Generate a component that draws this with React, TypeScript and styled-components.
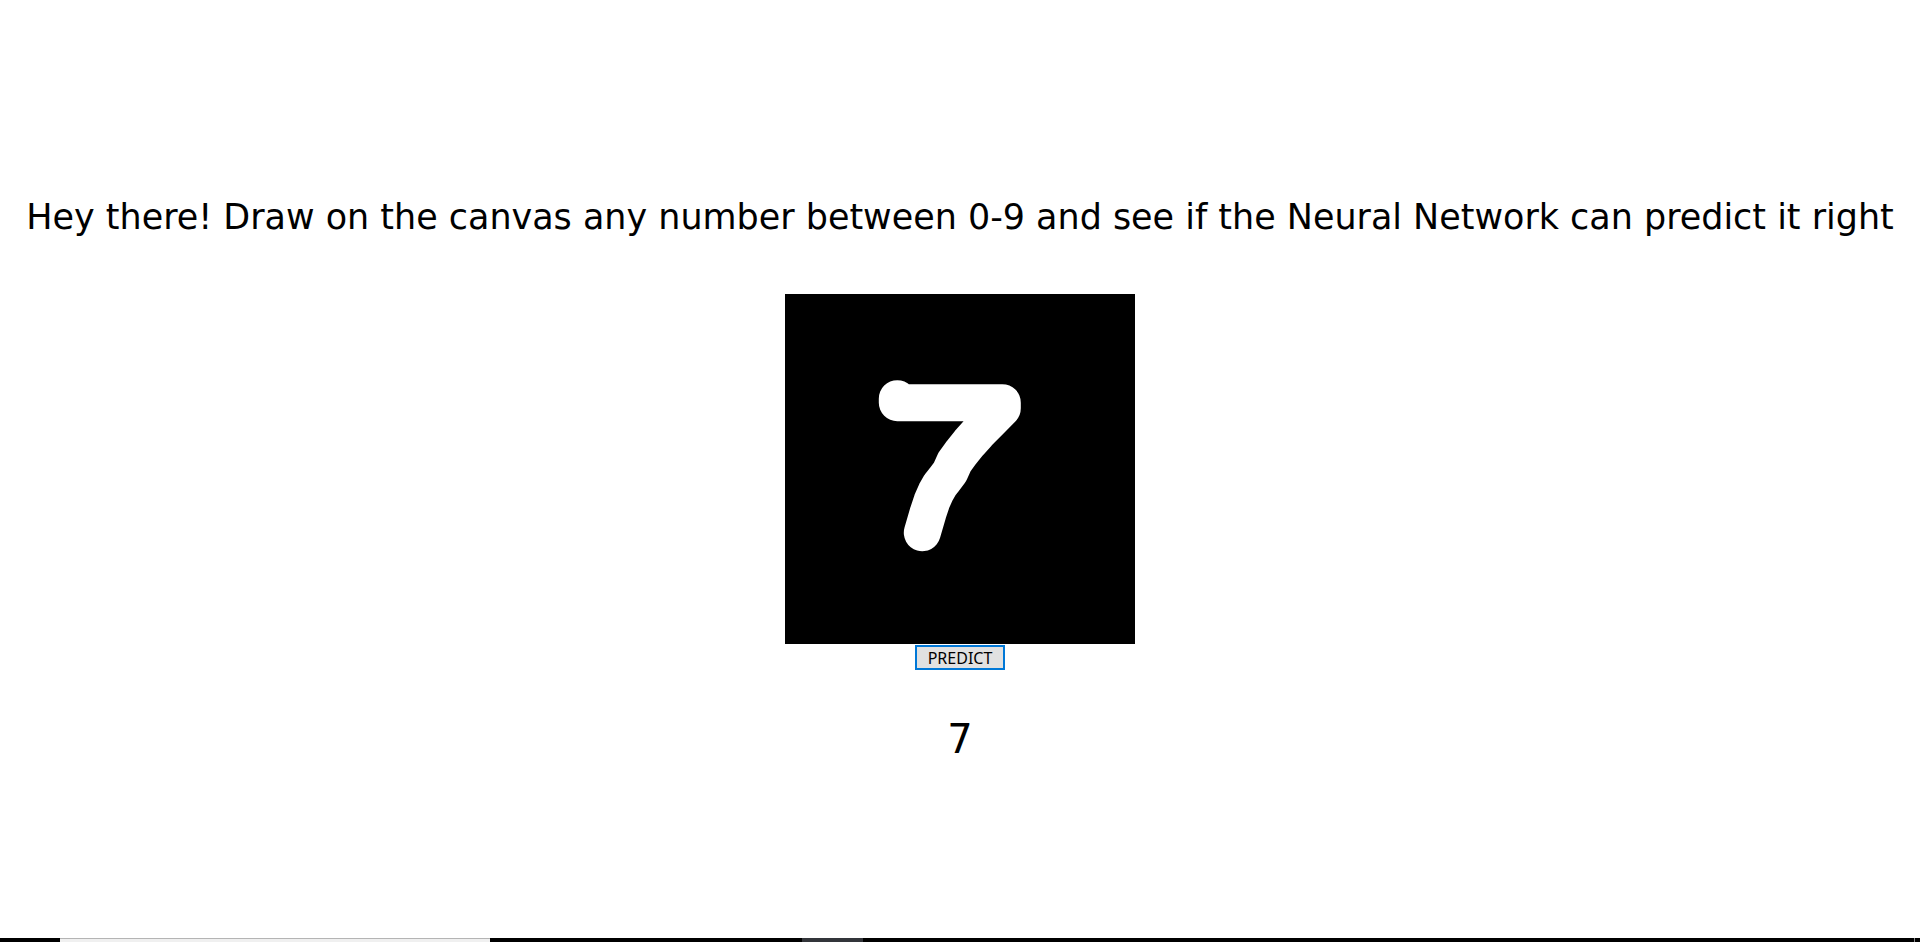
import styled, { createGlobalStyle } from "styled-components";

const GlobalStyle = createGlobalStyle`
  html, body {
    margin: 0;
    padding: 0;
    background: #fff;
    overflow: hidden;
  }
`;

const Page = styled.div`
  height: 942px;
  display: flex;
  flex-direction: column;
  align-items: center;
`;

const Main = styled.main`
  flex: 1;
  width: 100%;
  display: flex;
  flex-direction: column;
  align-items: center;
  padding-top: 193px;
  box-sizing: border-box;
`;

const Heading = styled.h1`
  margin: 0;
  font-family: "Comic Sans MS", "DejaVu Sans", sans-serif;
  font-size: 34.95px;
  line-height: 48px;
  font-weight: 400;
  color: #000;
  white-space: nowrap;
`;

const Canvas = styled.svg`
  display: block;
  width: 350px;
  height: 350px;
  margin-top: 53px;
  background: #000;
`;

const PredictButton = styled.button`
  margin-top: 1px;
  width: 90px;
  height: 25px;
  padding: 1px 0 0;
  box-sizing: border-box;
  border: 2px solid #0078d7;
  border-radius: 0;
  background: #e1e1e1;
  color: #000;
  font-family: "Noto Sans", sans-serif;
  font-size: 16px;
  line-height: 20px;
`;

const Result = styled.div`
  margin-top: 41px;
  font-family: "Comic Sans MS", "DejaVu Sans", sans-serif;
  font-size: 40px;
  line-height: 56px;
  color: #000;
`;

const Taskbar = styled.div`
  flex: none;
  width: 100%;
  height: 4px;
  display: grid;
  grid-template-columns: 60px 430px 312px 61px 1fr 1px 5px;
  background: #000;
`;

const ActiveTask = styled.div`
  background: #f0f0f0;
  border-top: 1px solid #b4b4b4;
`;

const Spacer = styled.div``;

const OpenTask = styled.div`
  background: #33353a;
`;

const CornerEdge = styled.div`
  background: #888;
`;

export default function App() {
  return (
    <Page>
      <GlobalStyle />
      <Main>
        <Heading>Hey there! Draw on the canvas any number between 0-9 and see if the Neural Network can predict it right</Heading>
        <Canvas viewBox="0 0 350 350">
          <path
            d="M112.3 104.7 L112.3 108.7 L217.3 108.7 L217.3 114.3 L205 127 L193 139 L184 149 L176 159 L169.5 168 L165 178 L159 186 L155 191 L151 198 L147 207 L143 219 L137.3 238.7"
            fill="none"
            stroke="#fff"
            strokeWidth="37"
            strokeLinecap="round"
            strokeLinejoin="round"
          />
        </Canvas>
        <PredictButton>PREDICT</PredictButton>
        <Result>7</Result>
      </Main>
      <Taskbar>
        <Spacer />
        <ActiveTask />
        <Spacer />
        <OpenTask />
        <Spacer />
        <CornerEdge />
        <Spacer />
      </Taskbar>
    </Page>
  );
}
